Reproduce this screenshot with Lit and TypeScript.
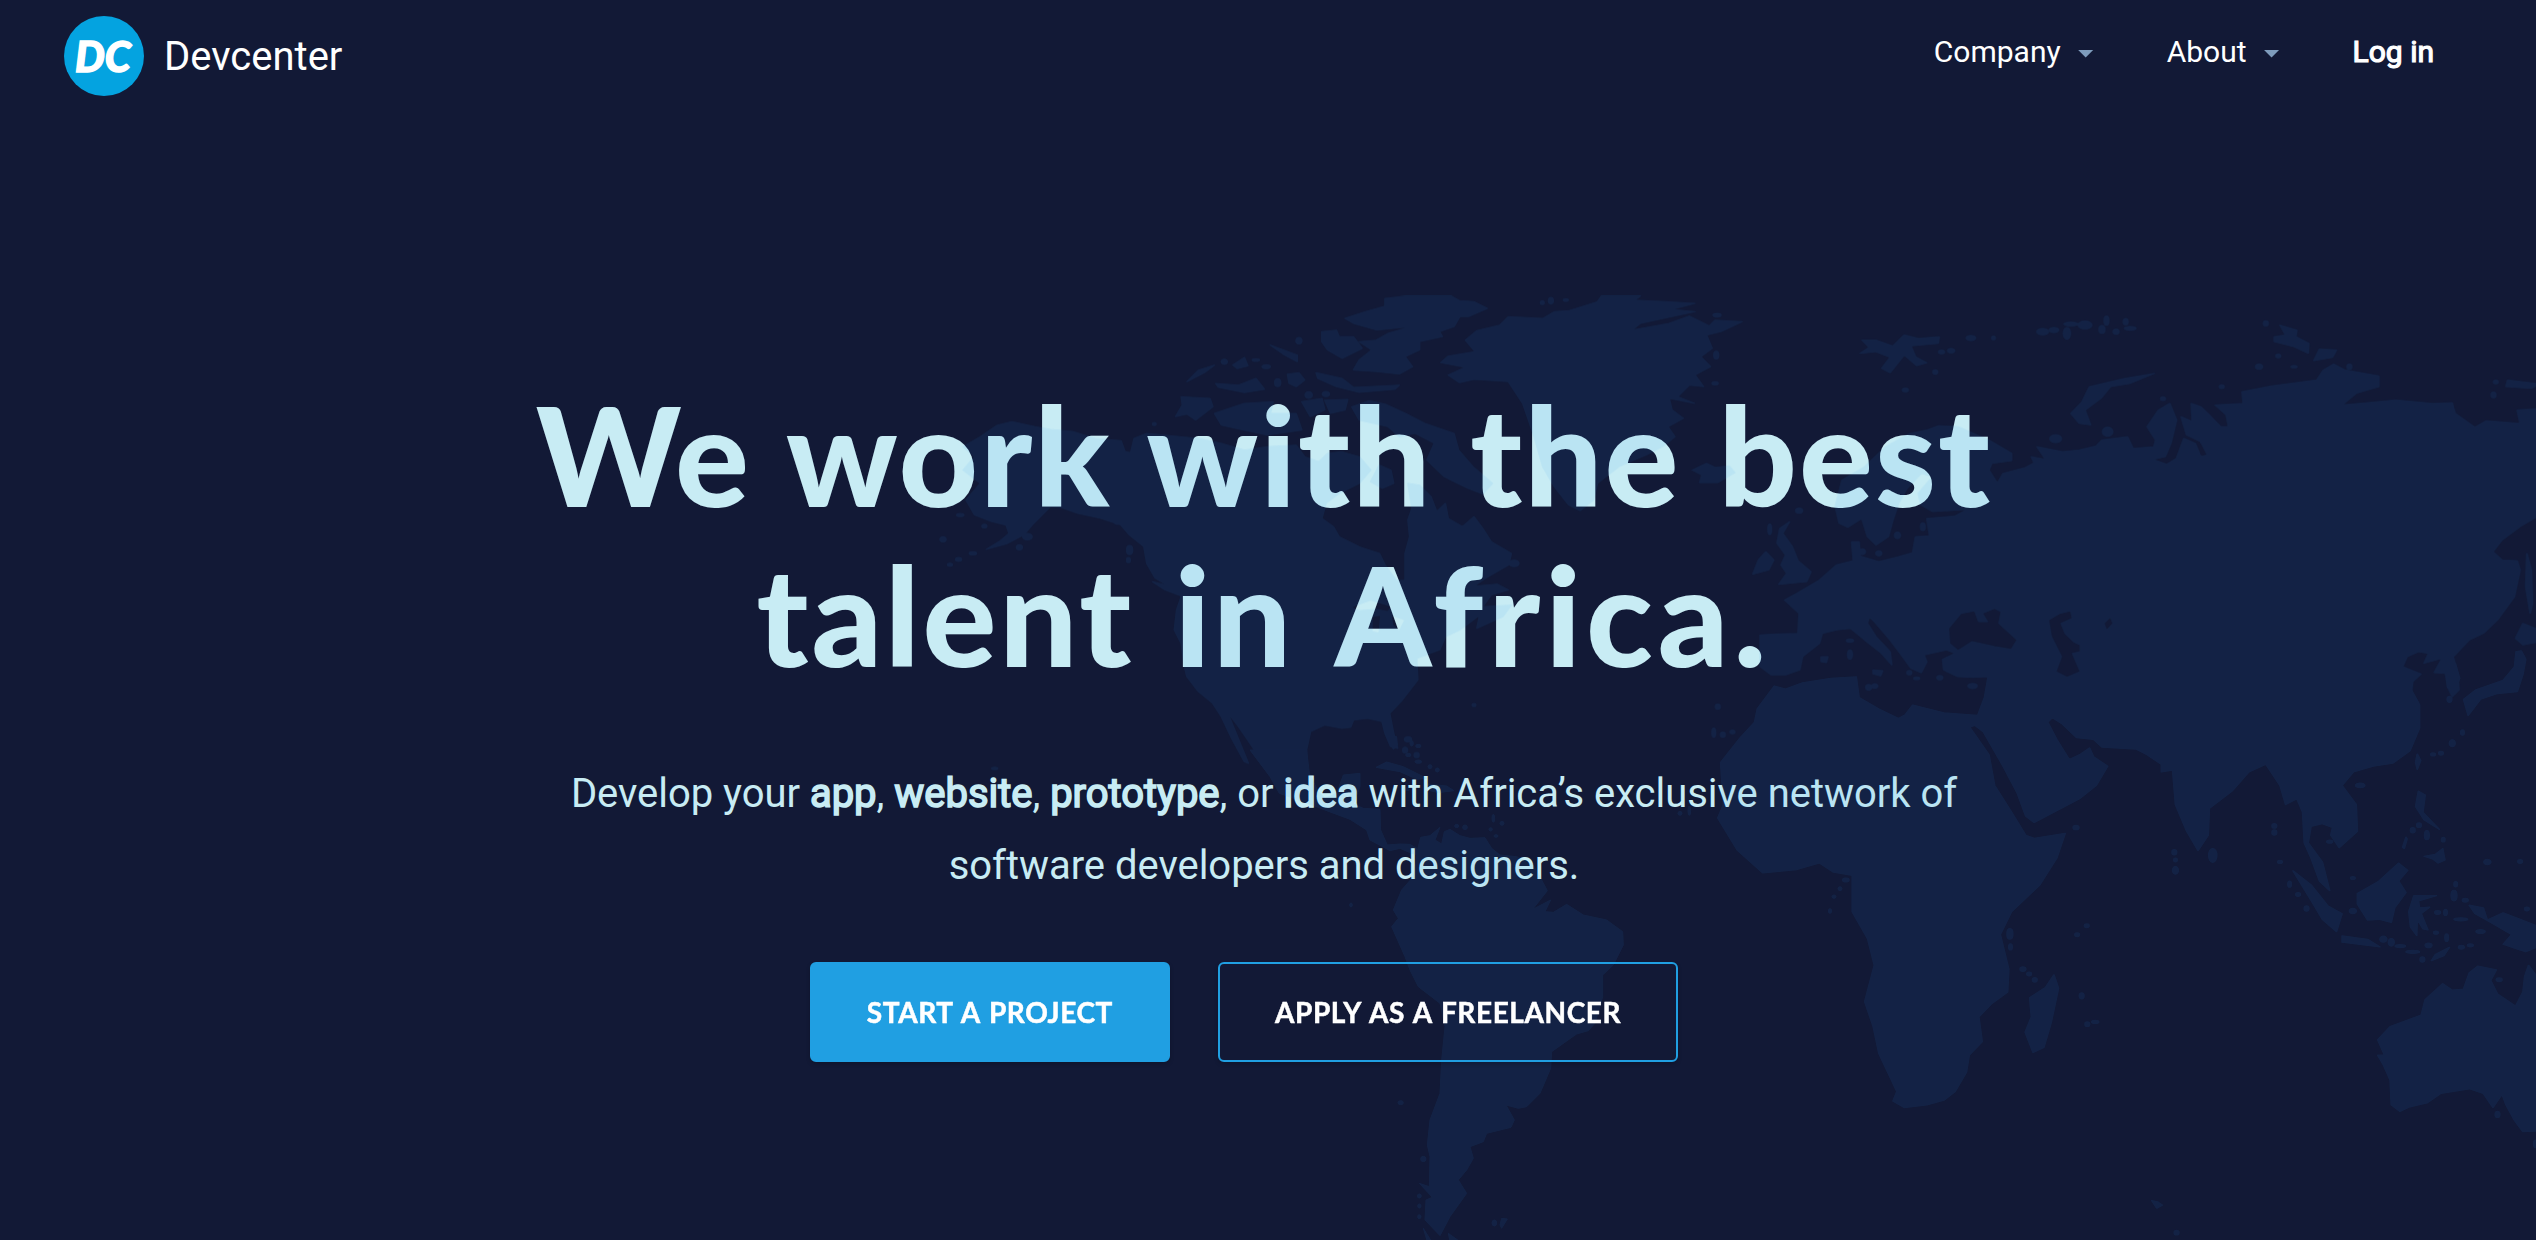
import {LitElement, css, html, svg} from 'lit';
import {customElement, property} from 'lit/decorators.js';

interface Sheet {
  transform: string;
  land: string[];
  // [cx, cy, rx, ry]
  islets: number[][];
}

/**
 * The map is split in sheets, each one drawn in its own grid and placed by its transform.
 */
const SHEETS: Sheet[] = [
  {
    // North America and Greenland
    transform: 'translate(900 270) scale(0.574 0.33333)',
    land: [
      // mainland, with the great lakes left open
      `M195 455 235 470 262 478 300 484 340 505 385 512 392 545 402 548 408 505 430 490 470 497 520 505
       560 520 600 540 640 530 690 525 705 560 730 575 745 550 770 545 800 560 820 600 800 640 765 670
       742 700 735 745 755 770 765 800 800 830 835 850 845 885 865 932 880 930 880 850 888 800 885 750
       892 715 885 640 905 645 925 680 935 725 950 700 955 745 980 770 1000 740 1015 775 1030 815
       1065 850 1060 885 1020 925 1000 948 1040 942 1060 960 1030 975 1015 1010 1065 1005 1050 1040
       1005 1075 1010 1035 975 1080 950 1100 940 1140 900 1165 902 1230 875 1290 853 1330 860 1390
       867 1435 855 1430 845 1390 840 1355 815 1345 790 1350 785 1372 770 1375 740 1365 715 1385
       708 1440 708 1510 645 1510 610 1420 590 1370 570 1325 607 1480 600 1475 578 1405 560 1340
       545 1300 520 1265 500 1220 495 1185 490 1120 478 1080 482 1020 490 980 470 950 445 925 430 880
       425 830 400 795 385 765 350 745 310 730 280 712 262 710 230 765 215 795 185 822 150 838 175 812
       190 790 185 765 160 755 130 735 115 690 140 640 110 600 130 560 110 530 140 500 170 465Z
       M785 1012 820 990 858 1010 850 1025 830 1018 800 1022Z
       M822 1040 838 1035 835 1090 822 1085Z M855 1035 880 1050 870 1085 858 1065Z`,
      // Baffin
      `M787 410 817 392 845 402 880 430 914 460 965 490 973 540 998 590 1032 640 1015 672 990 655
       948 620 918 570 931 520 897 490 870 500 850 470 800 450Z`,
      'M835 585 855 600 860 640 840 655 820 635Z',
      // Ellesmere
      `M845 85 880 78 960 78 975 92 1000 95 1023 115 990 140 975 140 965 170 940 185 945 200 905 215
       905 240 880 260 893 290 870 312 830 305 790 300 800 270 822 240 800 215 830 210 850 190 890 170
       830 180 790 160 775 145 810 125 845 108Z`,
      'M735 185 760 180 765 200 790 200 805 235 770 265 745 240 735 215Z',
      'M725 308 770 325 790 352 870 345 862 358 800 367 760 350 728 325Z',
      'M490 380 540 385 545 410 515 450 500 432 480 440 492 405Z',
      'M548 430 600 400 650 395 645 430 690 430 700 480 640 495 585 475 560 465Z',
      'M700 395 735 385 740 420 715 440Z',
      'M740 390 780 388 775 420 750 430Z',
      'M500 335 520 300 548 285 530 308Z',
      'M550 340 590 345 620 325 635 358 600 368 555 352Z',
      'M645 225 665 238 692 255 692 275 670 255Z',
      'M580 285 600 262 606 288 588 296Z',
      'M675 312 695 308 705 330 690 350 678 340Z',
      // Greenland
      `M1060 140 1120 145 1140 125 1165 122 1215 95 1222 78 1290 78 1280 90 1335 95 1385 100 1345 118
       1385 125 1290 160 1275 180 1340 160 1375 138 1410 168 1420 150 1467 155 1430 185 1405 195
       1415 235 1395 260 1412 290 1385 315 1400 350 1375 345 1355 380 1384 400 1340 385 1345 420 1365 445
       1338 470 1350 500 1328 530 1300 555 1252 590 1215 640 1208 690 1185 722 1165 705 1140 650
       1120 590 1105 500 1085 400 1060 335 1000 328 975 338 955 315 985 292 942 278 955 258 1002 245
       985 210 1005 182 1045 165Z`,
      'M440 935 470 948 485 975 462 960Z',
    ],
    islets: [
      [75, 808, 5, 8], [105, 735, 6, 5], [147, 768, 4, 6], [127, 850, 6, 5], [102, 868, 5, 6],
      [87, 884, 4, 5], [208, 832, 5, 8], [222, 800, 8, 10], [378, 755, 4, 8], [400, 840, 5, 14],
      [398, 870, 3, 8], [443, 462, 3, 5], [695, 212, 5, 10], [565, 275, 5, 8], [638, 290, 7, 6],
      [658, 338, 5, 12], [712, 375, 6, 10], [742, 372, 6, 8], [620, 270, 6, 4], [1134, 92, 4, 10],
      [1119, 98, 3, 6], [1160, 90, 4, 4], [1424, 135, 6, 5], [1422, 255, 4, 12], [1420, 340, 5, 5],
      [885, 1408, 6, 8], [880, 1440, 4, 9], [900, 1455, 4, 8], [1000, 1305, 3, 5], [165, 1495, 5, 4],
      [1070, 880, 8, 10],
    ],
  },
  {
    // Europe and the north of Asia
    transform: 'translate(1650 270) scale(0.565 0.33333)',
    land: [
      // continent, with the Black Sea, the Caspian and the Aral left open
      `M340 630 380 590 417 530 460 490 490 480 511 467 545 470 600 510 640 550 640 572 605 580 600 600
       615 640 625 610 665 592 680 578 675 560 700 568 685 530 730 545 760 540 790 528 800 510 845 500
       855 535 892 530 895 510 880 470 900 420 920 400 932 450 922 520 912 560 890 568 915 583 932 565
       945 505 965 520 975 560 987 555 975 515 950 495 940 440 960 455 958 400 975 410 990 435 1010 470
       1024 470 1020 435 1000 405 1050 400 1048 365 1100 348 1180 330 1192 300 1210 282 1230 300
       1290 318 1290 350 1250 370 1225 405 1270 398 1320 390 1385 400 1420 398 1425 430 1460 472
       1480 452 1540 460 1535 420 1575 415 1575 735 1540 770 1508 810 1492 845 1508 870 1535 872
       1540 900 1530 980 1500 1050 1475 1090 1450 1110 1422 1160 1430 1220 1432 1260 1420 1280
       1412 1250 1408 1210 1388 1208 1402 1165 1370 1180 1378 1150 1360 1145 1340 1160 1332 1190
       1365 1212 1350 1235 1348 1265 1360 1300 1000 1320 600 1320 598 1220 572 1222 545 1220 520 1200
       518 1168 540 1150 525 1140 485 1155 490 1175 480 1208 462 1195 445 1155 425 1110 400 1060
       388 1040 385 1060 400 1100 425 1145 428 1185 410 1150 380 1110 355 1075 330 1080 305 1090
       300 1120 270 1160 265 1200 240 1215 215 1215 195 1190 195 1095 225 1092 262 1090 264 1030
       238 990 260 970 300 930 330 885 360 872 357 815 370 815 372 858 405 875 440 860 465 848
       470 800 495 797 490 745 540 738 562 718 500 725 480 705 475 670 500 620 480 610 455 655 440 700
       430 750 422 800 400 825 385 800 375 745 350 772 335 760 328 710Z
       M530 1120 528 1075 550 1030 575 1022 582 1055 597 1055 588 1030 610 1015 622 1025 618 1060
       650 1110 640 1138 610 1130 570 1115 545 1142Z
       M745 1022 748 1045 728 1060 735 1090 750 1115 762 1125 762 1145 748 1150 762 1205 738 1222
       718 1205 728 1160 710 1100 705 1050 725 1030Z
       M815 1040 820 1060 808 1082 803 1060Z`,
      // Iceland
      'M75 600 100 580 115 592 140 588 150 608 120 638 88 638 92 615Z',
      // Great Britain and Ireland
      'M247 755 235 790 252 830 262 872 285 905 277 935 228 943 242 910 232 885 240 855 225 820 230 775Z',
      'M205 845 219 870 210 900 182 913 192 870Z',
      // Novaya Zemlya
      'M893 310 850 340 815 350 798 385 770 420 780 465 760 460 745 430 765 395 778 350 840 325Z',
      // Svalbard
      `M375 210 400 210 430 228 450 195 475 205 512 200 510 220 462 228 470 260 490 278 472 287
       450 255 425 308 410 295 425 262 400 245 372 250 388 232Z`,
      'M1115 165 1145 180 1143 200 1166 220 1165 250 1140 230 1105 215 1105 200 1125 195Z',
      'M1185 237 1215 240 1208 262 1175 272Z',
      'M1518 330 1575 342 1560 355 1515 350Z',
      // Sakhalin
      'M1552 850 1560 900 1562 1000 1558 1030 1550 950Z',
      'M1532 1105 1545 1060 1575 1080 1575 1115 1545 1125Z',
      'M395 1200 412 1202 408 1218 395 1212Z',
      'M303 1160 315 1160 312 1178 303 1175Z',
    ],
    islets: [
      [118, 135, 6, 5], [695, 185, 10, 10], [715, 180, 8, 8], [738, 190, 6, 18], [745, 162, 12, 6],
      [770, 165, 12, 12], [800, 178, 5, 12], [808, 152, 4, 14], [842, 155, 4, 10], [850, 175, 10, 6],
      [825, 185, 5, 8], [568, 204, 8, 8], [608, 204, 3, 6], [516, 246, 5, 6], [533, 242, 6, 7],
      [505, 306, 4, 7], [452, 360, 5, 6], [1090, 160, 4, 8], [1078, 290, 6, 8], [1112, 258, 4, 6],
      [1140, 290, 5, 4], [1238, 290, 4, 8], [1012, 350, 4, 6], [908, 386, 4, 6], [1493, 375, 4, 9],
      [1497, 336, 4, 6], [718, 506, 10, 12], [810, 485, 9, 14], [264, 722, 6, 8], [212, 778, 3, 16],
      [438, 796, 5, 10], [483, 770, 4, 12], [405, 850, 5, 8], [376, 845, 5, 9], [120, 1310, 4, 8],
      [113, 1388, 3, 14], [129, 1394, 4, 8], [146, 1386, 4, 6], [354, 1154, 4, 14], [354, 1112, 6, 5],
      [387, 1252, 5, 9], [398, 1248, 5, 7], [571, 1248, 8, 8], [459, 1208, 4, 7], [513, 1223, 5, 7],
      [472, 1225, 5, 4],
    ],
  },
  {
    // Central and South America
    transform: 'translate(1350 740) scale(0.33333)',
    land: [
      `M-300 30 -240 110 -212 160 -140 185 -62 215 0 238 50 270 60 300 120 332 150 325 185 340 205 345
       200 325 180 313 150 312 112 315 92 270 90 208 40 205 10 192 30 140 30 100 -20 105 -40 160 -75 175
       -95 155 -122 100 -130 30Z`,
      `M270 262 255 300 275 312 283 275 300 268 330 287 360 295 405 293 425 325 450 345 500 350 550 375
       575 420 592 452 548 508 602 480 585 515 610 517 650 493 700 525 770 540 818 575 820 615 790 675
       758 705 758 770 735 850 715 872 680 882 605 935 602 985 570 1060 530 1100 505 1105 468 1095
       493 1140 483 1162 410 1180 400 1205 360 1220 370 1255 350 1290 325 1320 350 1360 300 1430
       270 1487 225 1440 228 1380 247 1372 208 1330 238 1340 240 1250 232 1215 240 1140 270 1060
       275 960 285 860 270 790 205 740 180 690 165 650 125 560 145 535 130 510 155 450 190 410 198 370
       200 345 205 320 212 292 240 287Z`,
      // Cuba and Hispaniola
      'M78 82 110 66 160 80 230 115 200 118 150 95 110 88Z',
      'M235 132 290 138 312 152 265 158 240 152Z',
      'M295 1480 330 1505 300 1505Z',
      'M220 1465 245 1505 232 1505Z',
      'M455 1435 472 1437 455 1465 450 1455Z',
      'M110 -10 140 -10 142 15 130 28Z',
    ],
    islets: [
      [175, 45, 8, 5], [205, 18, 8, 5], [205, 65, 10, 5], [240, 80, 6, 6], [262, 90, 6, 6],
      [185, 10, 5, 8], [430, 235, 4, 12], [456, 250, 6, 6], [438, 288, 6, 4], [320, 258, 6, 5],
      [345, 262, 7, 7], [422, 268, 5, 5], [220, 1257, 8, 8], [208, 1368, 6, 6], [208, 1398, 5, 6],
      [208, 1430, 5, 6], [433, 1449, 7, 9], [152, 1088, 8, 6], [3, 495, 4, 6], [990, 220, 6, 6],
      [1018, 212, 4, 14], [1484, 420, 7, 6], [1470, 446, 6, 6], [1452, 470, 6, 5], [1440, 513, 5, 7],
      [170, 148, 10, 4],
    ],
  },
  {
    // Africa, the south of Asia and Oceania
    transform: 'translate(1650 640) scale(0.565 0.38265)',
    land: [
      `M220 120 240 128 270 112 320 100 365 96 370 150 405 180 440 205 452 195 465 170 520 190 580 197
       592 150 598 100 700 120 1340 110 1362 170 1362 230 1345 290 1315 322 1280 330 1245 345 1225 380
       1250 430 1252 500 1220 543 1205 510 1208 490 1190 480 1170 487 1165 530 1190 580 1203 655
       1185 630 1170 570 1158 530 1155 450 1145 415 1125 430 1115 380 1090 325 1060 345 1030 395
       990 440 988 510 970 550 950 500 930 430 925 340 905 345 905 325 880 300 860 285 800 280 785 260
       755 255 730 220 712 203 704 215 720 260 742 312 760 300 778 282 785 305 810 330 790 380 760 415
       680 477 665 460 650 400 625 330 590 240 575 223 566 228 600 300 610 380 640 450 665 510 680 518
       735 505 720 570 690 640 640 710 620 770 635 860 633 920 605 950 582 985 588 1050 565 1085
       560 1130 540 1180 520 1203 490 1215 450 1222 430 1205 437 1180 405 1080 395 1010 380 945
       397 850 385 780 358 710 358 615 325 607 300 583 260 600 200 609 155 550 120 465 130 430 125 320
       160 255 185 215 190 180Z`,
      // Madagascar
      'M715 875 723 910 710 1000 697 1065 678 1078 664 1025 675 985 672 935 700 908Z',
      // Sumatra, Java, Borneo and Sulawesi
      'M1138 603 1170 640 1200 695 1225 715 1215 762 1190 730 1170 680Z',
      'M1225 773 1270 782 1292 802 1225 790Z',
      `M1325 583 1341 602 1325 630 1338 660 1318 700 1312 738 1290 730 1270 732 1252 690 1252 662
       1290 630Z`,
      `M1352 668 1392 668 1360 682 1362 700 1380 698 1365 715 1377 758 1368 755 1358 730 1357 772
       1346 750 1343 710Z`,
      'M1383 838 1390 822 1415 803 1405 825Z',
      // Philippines
      'M1360 395 1372 405 1368 450 1397 495 1370 470 1355 435Z',
      'M1370 565 1390 560 1403 545 1407 575 1395 583 1385 572Z',
      'M1358 298 1364 315 1358 338 1355 320Z',
      'M1332 542 1338 515 1340 520 1335 545Z',
      // Japan and Korea
      `M1533 30 1542 28 1550 50 1545 90 1535 135 1500 140 1470 155 1448 197 1440 155 1462 130
       1510 105 1530 70Z`,
      'M1408 60 1425 60 1433 100 1425 130 1412 125Z',
      // New Guinea
      `M1450 693 1475 700 1482 732 1510 713 1540 730 1575 750 1575 800 1550 815 1510 795 1525 770
       1490 740 1460 715Z`,
      // Australia
      `M1465 852 1498 862 1488 890 1500 925 1532 957 1545 920 1548 880 1555 850 1575 890 1575 1283
       1545 1285 1530 1255 1515 1215 1508 1187 1492 1222 1475 1185 1450 1173 1400 1185 1375 1210
       1345 1220 1327 1232 1312 1215 1310 1150 1298 1110 1288 1085 1300 1085 1288 1045 1310 1010
       1365 980 1372 940 1403 898 1420 915 1440 912 1450 870Z`,
      'M888 1465 898 1468 907 1477 897 1485Z',
    ],
    islets: [
      [996, 563, 7, 18], [754, 490, 5, 6], [928, 555, 4, 7], [930, 575, 3, 5], [930, 602, 5, 10],
      [1105, 486, 4, 6], [1105, 503, 4, 7], [1115, 580, 4, 4], [1132, 638, 3, 8], [1147, 665, 4, 5],
      [1162, 702, 4, 7], [1244, 708, 6, 7], [1244, 622, 4, 4], [1203, 527, 5, 4], [1257, 380, 8, 6],
      [1420, 270, 5, 9], [1438, 242, 3, 7], [1400, 296, 4, 5], [1386, 299, 4, 4], [1482, 580, 6, 7],
      [1540, 579, 4, 5], [1423, 668, 5, 14], [1426, 638, 3, 7], [1394, 712, 5, 5], [1408, 712, 3, 8],
      [1435, 730, 12, 4], [1298, 782, 6, 8], [1312, 790, 5, 10], [1328, 800, 9, 4], [1350, 815, 12, 4],
      [1378, 798, 6, 6], [1410, 778, 3, 10], [1391, 765, 4, 4], [1436, 803, 5, 5], [1452, 798, 5, 4],
      [1470, 762, 8, 5], [1503, 888, 5, 5], [1500, 1240, 4, 8], [773, 747, 4, 5], [756, 770, 4, 5],
      [637, 768, 5, 14], [638, 802, 3, 8], [660, 860, 5, 6], [671, 873, 4, 5], [681, 888, 4, 6],
      [764, 930, 4, 8], [774, 1004, 4, 6], [788, 998, 6, 4], [932, 1549, 4, 6], [348, 627, 4, 5],
      [1568, 1317, 4, 10], [1361, 484, 4, 6], [1350, 497, 4, 7], [1404, 522, 3, 6], [1415, 155, 4, 8],
      [1552, 703, 4, 5], [1375, 510, 4, 12], [1367, 835, 4, 7], [1443, 680, 5, 5],
    ],
  },
];

@customElement('world-map')
export class WorldMap extends LitElement {
  static styles = css`
    :host {
      display: block;
      pointer-events: none;
    }

    svg {
      display: block;
      width: 100%;
      height: 100%;
    }

    .land {
      fill: #2994f4;
      fill-rule: evenodd;
      stroke: #2994f4;
      stroke-width: 3px;
      stroke-linejoin: round;
      opacity: 0.085;
    }
  `;

  render() {
    return html`
      <svg viewBox="0 0 2536 1240" aria-hidden="true">
        <g class="land">
          ${SHEETS.map(
            (sheet) => svg`
              <g transform=${sheet.transform}>
                ${sheet.land.map((d) => svg`<path d=${d} />`)}
                ${sheet.islets.map(
                  ([cx, cy, rx, ry]) => svg`<ellipse cx=${cx} cy=${cy} rx=${rx} ry=${ry} />`
                )}
              </g>
            `
          )}
        </g>
      </svg>
    `;
  }
}

/**
 * A link of the top bar, followed by a caret if it opens a menu.
 */
@customElement('nav-link')
export class NavLink extends LitElement {
  static styles = css`
    :host {
      display: flex;
      align-items: center;
      gap: 17px;
      font-size: 30px;
      line-height: 36px;
      color: #fff;
      white-space: nowrap;
    }

    :host([strong]) {
      -webkit-text-stroke: 1.2px #fff;
    }

    .caret {
      width: 16px;
      height: 8px;
      margin-top: 3px;
      background: #7e9cbd;
      clip-path: polygon(0 0, 100% 0, 50% 100%);
    }
  `;

  @property({type: Boolean, reflect: true}) menu = false;

  @property({type: Boolean, reflect: true}) strong = false;

  render() {
    return html`<slot></slot>${this.menu ? html`<span class="caret"></span>` : ''}`;
  }
}

@customElement('app-root')
export class AppRoot extends LitElement {
  static styles = css`
    :host {
      display: block;
      position: relative;
      width: 2536px;
      height: 1240px;
      overflow: hidden;
      background: #121936;
      font-family: Roboto, 'Liberation Sans', sans-serif;
    }

    world-map {
      position: absolute;
      inset: 0;
      z-index: 1;
    }

    header {
      display: flex;
      justify-content: space-between;
      box-sizing: border-box;
      height: 112px;
      padding: 16px 102px 0 64px;
    }

    .brand {
      display: flex;
      align-items: center;
      gap: 20px;
      height: 80px;
      font-size: 40px;
      color: #fff;
    }

    .logo {
      display: flex;
      align-items: center;
      justify-content: center;
      box-sizing: border-box;
      width: 80px;
      height: 80px;
      padding-right: 2px;
      border-radius: 50%;
      background: #04a3e0;
      font: italic 900 42px/80px Lato, sans-serif;
      -webkit-text-stroke: 1.4px #fff;
    }

    nav {
      display: flex;
      gap: 73px;
      height: 72px;
      align-items: center;
    }

    .hero {
      display: flex;
      flex-direction: column;
      align-items: center;
      padding-top: 262px;
      text-align: center;
      color: #c8ecf4;
    }

    h1 {
      display: flex;
      flex-direction: column;
      margin: 0;
      padding-right: 8px;
      font: 900 138px/160px Lato, sans-serif;
    }

    .line {
      letter-spacing: 2px;
      word-spacing: 3px;
    }

    .line.wide {
      letter-spacing: 2.7px;
      word-spacing: 5px;
    }

    .wide em {
      font-style: normal;
      letter-spacing: 5px;
    }

    p {
      margin: 64px 0 0;
      padding-right: 8px;
      font-size: 40px;
      line-height: 72px;
      letter-spacing: -0.03px;
    }

    p b {
      font-weight: 400;
      -webkit-text-stroke: 1.6px currentColor;
    }

    .actions {
      display: flex;
      position: relative;
      z-index: 2;
      margin-top: 60px;
    }

    .button {
      box-sizing: border-box;
      height: 100px;
      margin-right: 48px;
      padding: 0 55px;
      border: 2px solid #209fe2;
      border-radius: 6px;
      box-shadow: 0 2px 4px rgba(0, 0, 0, 0.2);
      font: 700 28px/96px Lato, sans-serif;
      letter-spacing: 0.6px;
      word-spacing: 1.5px;
      color: #fff;
      -webkit-text-stroke: 0.5px #fff;
    }

    .button.primary {
      background: #209fe2;
    }
  `;

  render() {
    return html`
      <header>
        <div class="brand">
          <span class="logo">DC</span>
          <span>Devcenter</span>
        </div>
        <nav>
          <nav-link menu>Company</nav-link>
          <nav-link menu>About</nav-link>
          <nav-link strong>Log in</nav-link>
        </nav>
      </header>
      <section class="hero">
        <h1>
          <span class="line">We work with the best</span>
          <span class="line wide">talent in <em>Africa.</em></span>
        </h1>
        <p>
          Develop your <b>app</b>, <b>website</b>, <b>prototype</b>, or <b>idea</b> with Africa’s
          exclusive network of<br />software developers and designers.
        </p>
        <div class="actions">
          <span class="button primary">START A PROJECT</span>
          <span class="button">APPLY AS A FREELANCER</span>
        </div>
      </section>
      <world-map></world-map>
    `;
  }
}
